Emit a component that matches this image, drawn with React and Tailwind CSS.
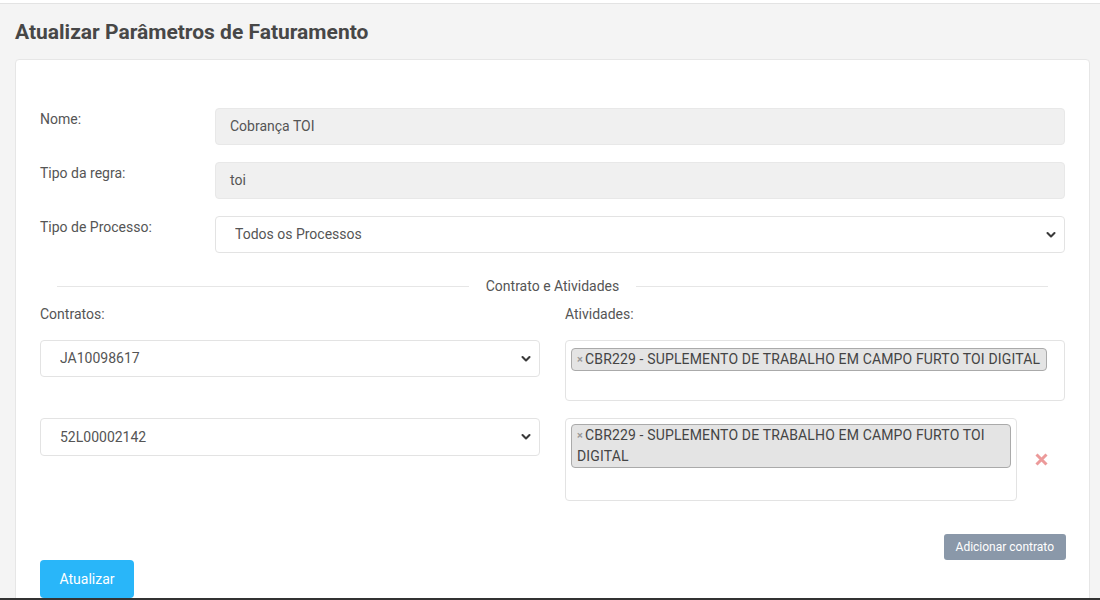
import React from "react";

function Chevron() {
  return (
    <svg className="pointer-events-none absolute right-[9px] top-1/2 -translate-y-1/2" width="10" height="7" viewBox="0 0 10 7">
      <path d="M1.5 1.5 L5 5 L8.5 1.5" fill="none" stroke="#3a3a3a" strokeWidth="2.1" strokeLinecap="round" strokeLinejoin="round" />
    </svg>
  );
}

function SelectBox({ value, className = "" }) {
  return (
    <div className={"relative " + className}>
      <select
        defaultValue={value}
        className="w-full h-full appearance-none bg-white border border-[#e3e3e3] rounded-[4px] pl-[19px] pr-8 text-[14px] text-[#555] outline-none"
      >
        <option>{value}</option>
      </select>
      <Chevron />
    </div>
  );
}

function Tag({ children }) {
  return (
    <div className="inline-block bg-[#e4e4e4] border border-[#aaa] rounded-[4px] pl-[5px] pr-[6px] text-[14px] leading-[21px] tracking-[0.15px] text-[#444]">
      <span className="text-[#999] text-[11px] font-bold mr-[2px] align-[1px]">×</span>
      {children}
    </div>
  );
}

export default function App() {
  return (
    <div className="min-h-screen bg-[#f4f4f4] font-['Roboto','Liberation_Sans',sans-serif] text-[#555]">
      <div className="h-[4px] bg-white border-b border-[#e3e3e3]" />
      <h1 className="pl-[15px] pt-[15px] pb-[14px] text-[21px] leading-[26px] font-bold text-[#474747]">
        Atualizar Parâmetros de Faturamento
      </h1>
      <div className="ml-[15px] mr-[10px] bg-white border border-[#e6e6e6] rounded-[4px] pt-[48px] px-[24px] pb-[20px]">
        <div className="flex flex-col gap-[17px]">
          <div className="flex">
            <label className="w-[175px] shrink-0 pt-[1px] text-[14px]">Nome:</label>
            <div className="flex-1 h-[37px] bg-[#f0f0f0] border border-[#e8e8e8] rounded-[4px] px-[14px] flex items-center text-[14px] text-[#555]">
              Cobrança TOI
            </div>
          </div>
          <div className="flex">
            <label className="w-[175px] shrink-0 pt-[1px] text-[14px]">Tipo da regra:</label>
            <div className="flex-1 h-[37px] bg-[#f0f0f0] border border-[#e8e8e8] rounded-[4px] px-[14px] flex items-center text-[14px] text-[#555]">
              toi
            </div>
          </div>
          <div className="flex">
            <label className="w-[175px] shrink-0 pt-[1px] text-[14px]">Tipo de Processo:</label>
            <SelectBox value="Todos os Processos" className="flex-1 h-[37px]" />
          </div>
        </div>

        <div className="mt-[23px] flex items-center gap-[17px] px-[17px]">
          <div className="flex-1 h-px bg-[#e6e6e6]" />
          <span className="text-[14px] text-[#555]">Contrato e Atividades</span>
          <div className="flex-1 h-px bg-[#e6e6e6]" />
        </div>

        <div className="grid grid-cols-2 gap-x-[25px] mt-[7px] text-[14px]">
          <div className="leading-[20px]">Contratos:</div>
          <div className="leading-[20px]">Atividades:</div>
        </div>

        <div className="grid grid-cols-2 gap-x-[25px] mt-[16px]">
          <SelectBox value="JA10098617" className="h-[37px]" />
          <div className="h-[61px] border border-[#e3e3e3] rounded-[4px] pt-[6px] px-[5px]">
            <Tag>CBR229 - SUPLEMENTO DE TRABALHO EM CAMPO FURTO TOI DIGITAL</Tag>
          </div>
        </div>

        <div className="grid grid-cols-2 gap-x-[25px] mt-[17px]">
          <SelectBox value="52L00002142" className="h-[38px]" />
          <div className="flex">
            <div className="w-[452px] h-[83px] border border-[#e3e3e3] rounded-[4px] pt-[5px] px-[5px]">
              <Tag>CBR229 - SUPLEMENTO DE TRABALHO EM CAMPO FURTO TOI DIGITAL</Tag>
            </div>
            <div className="flex-1 flex items-center justify-center">
              <svg width="13" height="13" viewBox="0 0 13 13">
                <path d="M1.5 1.5 L11.5 11.5 M11.5 1.5 L1.5 11.5" stroke="#ec9a9a" strokeWidth="3" strokeLinecap="butt" />
              </svg>
            </div>
          </div>
        </div>

        <div className="flex justify-end mt-[33px]">
          <button className="h-[26px] px-[12px] bg-[#8a98a9] rounded-[3px] text-white text-[12px] mr-[-1px]">
            Adicionar contrato
          </button>
        </div>
        <button className="w-[94px] h-[38px] bg-[#29b6f9] rounded-[4px] text-white text-[14px]">
          Atualizar
        </button>
      </div>
      <div className="fixed left-0 right-0 bottom-0 h-[2px] bg-[#333]" />
    </div>
  );
}
